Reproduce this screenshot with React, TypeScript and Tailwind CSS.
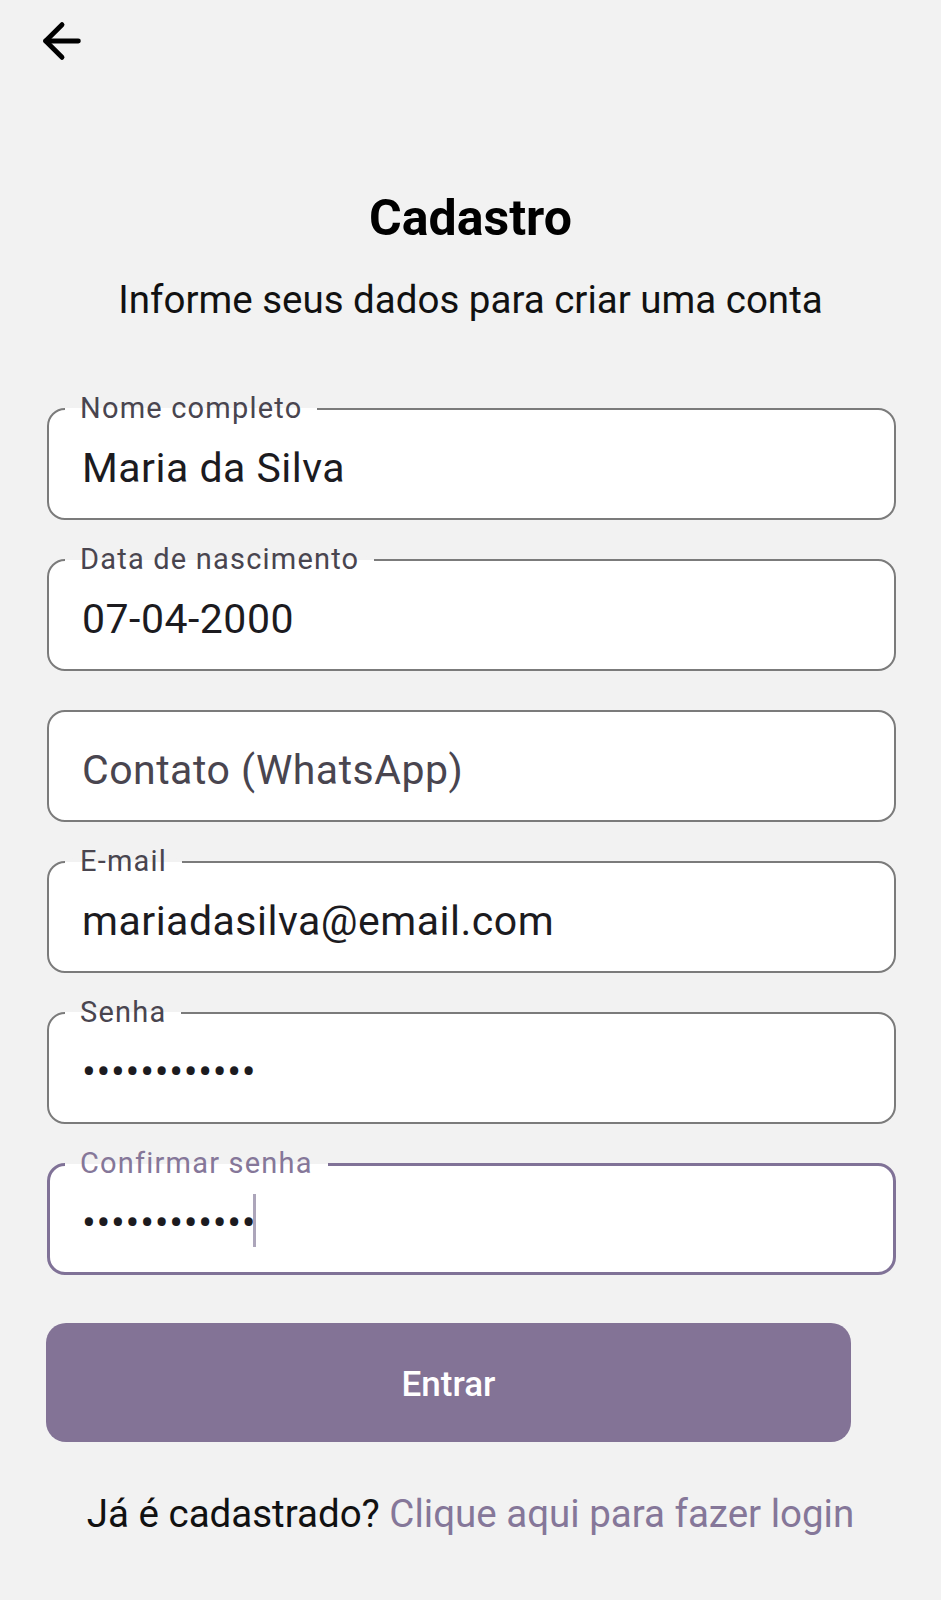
import { ArrowLeft } from "lucide-react";

type FieldProps = {
  label?: string;
  value?: string;
  placeholder?: string;
  focused?: boolean;
  secret?: boolean;
};

function Field({ label, value, placeholder, focused, secret }: FieldProps) {
  const border = focused
    ? "border-[3px] border-[#807297] pl-[32px]"
    : "border-2 border-[#7b7b7b] pl-[33px]";

  return (
    <div className={`relative h-[112px] rounded-[18px] bg-white flex items-center pt-2 ${border}`}>
      {label && (
        <span
          className={`absolute px-[15px] text-[29px] leading-[29px] tracking-[1.2px] bg-linear-to-b from-[#f2f2f2] from-50% to-white to-50% ${
            focused ? "top-[-17px] left-[15px] text-[#857799]" : "top-[-16px] left-[16px] text-[#49454f]"
          }`}
        >
          {label}
        </span>
      )}
      {value ? (
        <span
          className={`text-[41px] leading-[41px] text-[#1c1b1f] ${secret ? "tracking-[0.7px]" : "tracking-[0.5px]"}`}
        >
          {value}
        </span>
      ) : (
        <span className="text-[41px] leading-[41px] tracking-[0.5px] text-[#49454f]">{placeholder}</span>
      )}
      {focused && <span className="ml-[-3px] mb-[5px] inline-block w-[3px] h-[53px] bg-[#aca5ba]" />}
    </div>
  );
}

export default function App() {
  return (
    <div className="min-h-[1600px] bg-[#f2f2f2] font-['Roboto',sans-serif] text-[#111]">
      <div className="pt-[13px] pl-[34px]">
        <ArrowLeft size={56} strokeWidth={2.1} color="#000" />
      </div>

      <h1 className="mt-[125px] text-center text-[50px] leading-[49px] font-bold text-black">Cadastro</h1>
      <p className="mt-[38px] text-center text-[38.5px] leading-[38px]">
        Informe seus dados para criar uma conta
      </p>

      <form className="mt-[89px] ml-[47px] w-[849px] flex flex-col gap-[39px]">
        <Field label="Nome completo" value="Maria da Silva" />
        <Field label="Data de nascimento" value="07-04-2000" />
        <Field placeholder="Contato (WhatsApp)" />
        <Field label="E-mail" value="mariadasilva@email.com" />
        <Field label="Senha" value="••••••••••••" secret />
        <Field label="Confirmar senha" value="••••••••••••" secret focused />
      </form>

      <button
        type="button"
        className="mt-[48px] ml-[46px] w-[805px] h-[119px] rounded-[20px] bg-[#837396] text-white text-[35px] leading-[35px] font-medium pt-[4px]"
      >
        Entrar
      </button>

      <p className="mt-[53px] text-center text-[38.5px] leading-[38px]">
        Já é cadastrado? <span className="text-[#857799]">Clique aqui para fazer login</span>
      </p>
    </div>
  );
}
